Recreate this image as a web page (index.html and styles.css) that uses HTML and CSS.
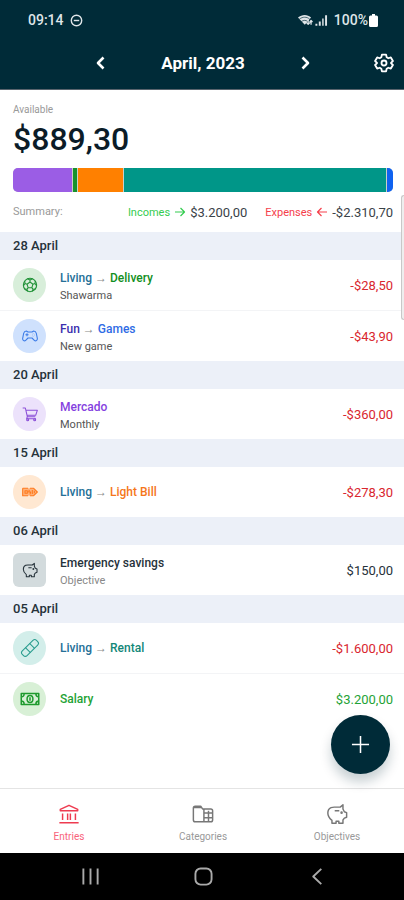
FILE: index.html
```html
<!DOCTYPE html>
<html lang="en">
<head>
<meta charset="utf-8">
<meta name="viewport" content="width=device-width, initial-scale=1">
<title>Entries</title>
<link rel="stylesheet" href="styles.css">
</head>
<body>
<svg class="defs" aria-hidden="true">
  <symbol id="pig" viewBox="0 0 24 24">
    <path d="M9 4.500h6.500L18.500 2v4.500l1.500 3 2.500 1v5l-2.500 1-1.500 2V22h-4.500v-2h-3v2H6.500v-3Q2 15.500 2 11t3.500-6Q7 4.500 9 4.500zM9.500 8.500h5"/>
    <circle cx="17" cy="10.500" r=".6"/>
  </symbol>
</svg>
<header class="top">
  <div class="status">
    <span class="status-side">09:14
      <svg class="dnd" viewBox="0 0 12 12"><circle cx="6" cy="6" r="4.800"/><path d="M3.500 6h5"/></svg>
    </span>
    <span class="status-side">
      <svg class="signal" viewBox="0 0 31 14">
        <path class="solid" d="M0 4.500C4 1 10 1 13.500 4.500L7 12z"/>
        <path class="gap" d="M1.500 6C5 3.500 9 3.500 12 6M3.500 8.500C6 7 8 7 10 8.500"/>
        <path class="wave" d="M10.500 6.500v5m-2-2 2 2 2-2M13.500 12V7.500m-1.500 1.500 1.500-1.500L15 9"/>
        <path class="solid" d="M18 13v-2h2v2zM21.500 13V8.500h2V13zM25 13V5.500h1.500V13zM28 13V2h2v11z"/>
      </svg>
      <span class="charge">100%<svg class="battery" viewBox="0 0 9 13"><path d="M3 0h3v1.500h1.500Q9 1.500 9 3v8.500Q9 13 7.500 13h-6Q0 13 0 11.500V3Q0 1.500 1.500 1.500H3z"/></svg></span>
    </span>
  </div>
  <div class="month-bar">
    <div class="month">
      <button class="icon-btn" aria-label="Previous month"><svg class="chevron" viewBox="0 0 16 16"><path d="M10.500 2.500 5 8l5.500 5.500"/></svg></button>
      <h1>April, 2023</h1>
      <button class="icon-btn" aria-label="Next month"><svg class="chevron" viewBox="0 0 16 16"><path d="M5.500 2.500 11 8l-5.500 5.500"/></svg></button>
    </div>
    <button class="icon-btn settings" aria-label="Settings"><svg class="gear" viewBox="0 0 24 24"><path d="M9.500 2h5l.7 3.100 2 1.200 3-1 2.500 4.300L20.400 11.800v.4l2.300 2.200-2.500 4.300-3-1-2 1.200-.7 3.100h-5l-.7-3.100-2-1.200-3 1-2.500-4.300 2.300-2.200v-.4L1.300 9.600l2.500-4.300 3 1 2-1.200z"/><circle cx="12" cy="12" r="3"/></svg></button>
  </div>
</header>

<main class="content">
  <section class="overview">
    <p class="label">Available</p>
    <p class="balance">$889,30</p>
    <div class="bar">
      <span class="seg purple" style="flex-grow:59"></span>
      <span class="seg green" style="flex-grow:4"></span>
      <span class="seg orange" style="flex-grow:45"></span>
      <span class="seg teal" style="flex-grow:262"></span>
      <span class="seg blue" style="flex-grow:6"></span>
    </div>
    <div class="summary">
      <span class="label">Summary:</span>
      <span class="total income">Incomes <svg class="arrow" viewBox="0 0 12 12"><path d="M1 6h9.500M6.500 2l4 4-4 4"/></svg> <b>$3.200,00</b></span>
      <span class="total expense">Expenses <svg class="arrow" viewBox="0 0 12 12"><path d="M11 6H1.500M5.500 2l-4 4 4 4"/></svg> <b>-$2.310,70</b></span>
    </div>
  </section>

  <section class="day">
    <h2>28 April</h2>
    <ul>
      <li>
        <span class="badge bg-green"><svg viewBox="0 0 24 24"><circle cx="12" cy="12" r="10"/><path d="m12 7.500 4.500 3.300-1.700 5.200H9.200l-1.700-5.200zM12 7.500V4.500l4-1.800M12 4.500 8 2.700M16.500 10.800l3-1 2 3M19.500 9.800l.5-4M14.800 16l1.700 2.500 4-.5M16.500 18.500l-1 3M9.200 16l-1.700 2.500-4-.5M7.500 18.500l1 3M7.500 10.800l-3-1-2 3M4.500 9.800 4 5.800"/></svg></span>
        <div class="info"><p class="name"><span class="c-living">Living</span> <i>→</i> <span class="c-green">Delivery</span></p><p class="note">Shawarma</p></div>
        <span class="amount c-red">-$28,50</span>
      </li>
      <li>
        <span class="badge bg-blue"><svg viewBox="0 0 24 24"><path d="M6.500 4.500 9 6h6l2.500-1.500c2 0 3.500 1.500 4 3.500l1.500 7.500c.5 3-2.500 5-4.500 3L15 15H9l-3.500 3.500c-2 2-5 0-4.500-3L2.500 8c.5-2 2-3.500 4-3.500zM7.500 8v4.500M5.200 10.200h4.600M15 10.500h.5M18.500 10.500h.5M16.800 8.500v.5M16.800 12v.5"/></svg></span>
        <div class="info"><p class="name"><span class="c-indigo">Fun</span> <i>→</i> <span class="c-blue">Games</span></p><p class="note">New game</p></div>
        <span class="amount c-red">-$43,90</span>
      </li>
    </ul>
  </section>

  <section class="day">
    <h2>20 April</h2>
    <ul>
      <li>
        <span class="badge bg-purple"><svg viewBox="0 0 24 24"><path d="M1 3h4l3 13h12M5.800 6.500H23L20.500 14H7.500M8 16l-1 3h14"/><circle cx="8.500" cy="20.500" r="1.500"/><circle cx="19" cy="20.500" r="1.500"/></svg></span>
        <div class="info"><p class="name c-purple">Mercado</p><p class="note">Monthly</p></div>
        <span class="amount c-red">-$360,00</span>
      </li>
    </ul>
  </section>

  <section class="day">
    <h2>15 April</h2>
    <ul>
      <li>
        <span class="badge bg-orange"><svg viewBox="0 0 24 24"><path class="tint" d="M1 6.500h16.500l5.500 5.500-5.500 5.500H1z"/><path d="M1 6.500h8M12 6.500h5.500l5.500 5.500-5.500 5.500H12M9 17.500H1v-11M4.500 10H8v4H4.500zM11 9l-1 3h3l-1 3.500M15.500 9v6M18.500 10v4"/></svg></span>
        <div class="info"><p class="name"><span class="c-living">Living</span> <i>→</i> <span class="c-orange">Light Bill</span></p></div>
        <span class="amount c-red">-$278,30</span>
      </li>
    </ul>
  </section>

  <section class="day">
    <h2>06 April</h2>
    <ul>
      <li>
        <span class="badge square"><svg><use href="#pig"/></svg></span>
        <div class="info"><p class="name">Emergency savings</p><p class="note soft">Objective</p></div>
        <span class="amount">$150,00</span>
      </li>
    </ul>
  </section>

  <section class="day">
    <h2>05 April</h2>
    <ul>
      <li>
        <span class="badge bg-teal"><svg class="wide" viewBox="0 0 24 24"><rect x="0" y="8" width="24" height="8" rx="3" transform="rotate(-45 12 12)"/><path d="M6.500 11.500l6 6M11.500 6.500l6 6M12 12h.1M18 6h.1M6 18h.1"/></svg></span>
        <div class="info"><p class="name"><span class="c-living">Living</span> <i>→</i> <span class="c-teal">Rental</span></p></div>
        <span class="amount c-red">-$1.600,00</span>
      </li>
      <li>
        <span class="badge bg-lime"><svg class="wide" viewBox="0 0 24 24"><path class="heavy" d="M1.500 5.500h21v13h-21zM1.500 9.500q3.500 0 3.500-4M22.500 9.500q-3.500 0-3.500-4M1.500 14.500q3.500 0 3.500 4M22.500 14.500q-3.500 0-3.500 4"/><ellipse class="heavy" cx="12" cy="12" rx="3.500" ry="4.200"/><path class="heavy" d="M12 10v4"/></svg></span>
        <div class="info"><p class="name c-lime">Salary</p></div>
        <span class="amount c-lime">$3.200,00</span>
      </li>
    </ul>
  </section>
  <span class="scroll-thumb"></span>
</main>

<footer class="bottom">
  <button class="fab" aria-label="Add entry"><svg viewBox="0 0 20 20"><path d="M10 1v18M1 10h18"/></svg></button>
  <nav class="tabs">
    <a href="#entries" class="active"><svg viewBox="0 0 24 24"><path d="M2.500 8.500V7L12 2.500 21.500 7v1.500zM5 11.500v7M10.500 11.500v7M13.500 11.500v7M19 11.500v7M1.500 21.500h21"/></svg>Entries</a>
    <a href="#categories"><svg viewBox="0 0 24 24"><path d="M22.500 18.500q0 2-2 2h-17q-2 0-2-2V5.500q0-2 2-2h6l2 3h9q2 0 2 2zM2 5h8M13 6.500v14M13 11h9.500M13 16h9.500M18 8.500v12"/></svg>Categories</a>
    <a href="#objectives"><svg><use href="#pig"/></svg>Objectives</a>
  </nav>
  <div class="system">
    <button aria-label="Recent apps"><svg viewBox="0 0 20 20"><path d="M2.500 1.500v17M10 1.500v17M17.500 1.500v17"/></svg></button>
    <button aria-label="Home"><svg viewBox="0 0 20 20"><rect x="1.500" y="1.500" width="17" height="17" rx="5.500"/></svg></button>
    <button aria-label="Back"><svg viewBox="0 0 20 20"><path d="M14 2 5.500 10l8.500 8"/></svg></button>
  </div>
</footer>
</body>
</html>
```
FILE: styles.css
```css
* { box-sizing: border-box; margin: 0; padding: 0; }

body {
  display: flex;
  flex-direction: column;
  min-height: 100vh;
  background: #fff;
  color: #26323a;
  font-family: Roboto, "Liberation Sans", sans-serif;
  font-size: 12px;
}

button { border: 0; background: none; color: inherit; font: inherit; }
ul { list-style: none; }
svg { display: block; fill: none; stroke: currentColor; stroke-linejoin: round; flex: none; }
.defs { position: absolute; width: 0; height: 0; }

/* Header */
.top { background: #002b38; color: #fff; border-bottom: 1px solid #59646d; }
.status {
  display: flex;
  justify-content: space-between;
  align-items: center;
  height: 40px;
  padding: 0 26px 0 28px;
  color: #dfe5e8;
  font-size: 14px;
  font-weight: 500;
}
.status-side { display: flex; align-items: center; gap: 6px; }
.charge { display: flex; align-items: center; gap: 1px; }
.dnd { width: 13px; height: 13px; stroke-width: 1.3; }
.signal { width: 30px; height: 14px; stroke: none; }
.battery { width: 9px; height: 13px; fill: #fff; stroke: none; }
.solid { fill: #dfe5e8; }
.gap { stroke: #002b38; stroke-width: .7; }
.wave { stroke: #dfe5e8; stroke-width: 1.3; }

.month-bar {
  display: grid;
  grid-template-columns: 1fr auto 1fr;
  align-items: center;
  height: 49px;
  padding: 0 8px 4px 10px;
}
.month { grid-column: 2; display: flex; align-items: center; justify-content: space-between; width: 228px; }
.month h1 { font-size: 17px; font-weight: 700; line-height: 24px; }
.icon-btn { display: grid; place-items: center; width: 24px; height: 24px; }
.settings { justify-self: end; }
.chevron { width: 16px; height: 16px; stroke-width: 2.6; }
.gear { width: 20px; height: 20px; stroke-width: 2.2; }

/* Overview */
.content { flex: 1; position: relative; }
.overview { padding: 12px 11px 0 13px; }
.label { color: #999; font-size: 10px; line-height: 16px; }
.balance { font-size: 32px; font-weight: 500; line-height: 42px; color: #0b1c28; }
.bar {
  display: flex;
  gap: 1px;
  height: 24px;
  margin-top: 8px;
  border-radius: 5px;
  overflow: hidden;
  background: #c9cfc9;
}
.seg { flex-basis: 0; }
.purple { background: #9b5de5; }
.green { background: #16922c; }
.orange { background: #ff8000; }
.teal { background: #009688; }
.blue { background: #0f62f0; }
.summary { display: flex; align-items: center; height: 40px; }
.summary .label { margin-right: auto; font-size: 11px; }
.total { display: flex; align-items: center; gap: 4px; font-size: 11px; }
.total b { color: #3a4248; font-size: 13px; font-weight: 400; }
.income { color: #35cc50; margin-right: 18px; }
.expense { color: #f5404c; }
.arrow { width: 12px; height: 12px; stroke-width: 1.2; }

/* Entries */
.day h2 {
  padding-left: 13px;
  background: #ecf0f8;
  font-size: 13px;
  font-weight: 500;
  line-height: 28px;
}
.day li {
  display: flex;
  align-items: center;
  gap: 14px;
  height: 50px;
  padding: 0 11px 0 13px;
}
.day li + li { border-top: 1px solid #f3f4f6; height: 51px; }
.badge {
  display: grid;
  place-items: center;
  width: 33px;
  height: 34px;
  border-radius: 50%;
}
.badge svg { width: 16px; height: 16px; stroke-width: 1.6; }
.badge svg.wide { width: 20px; height: 20px; stroke-width: 1.3; }
.badge .heavy { stroke-width: 1.8; }
.tint { fill: #ffb27a; stroke: none; }
.square { border-radius: 6px; background: #d3dbdd; }
.bg-green { background: #d8eeda; color: #1f9136; }
.bg-blue { background: #cfe1fd; color: #3c7ce8; }
.bg-purple { background: #ece2fb; color: #8b4fd8; }
.bg-orange { background: #ffe8d2; color: #ff7a1c; }
.bg-teal { background: #d3eeea; color: #2a9d8f; }
.bg-lime { background: #d8f0d6; color: #1f9a2e; }
.info { flex: 1; }
.info:has(.note) { padding-top: 3px; }
.name { font-size: 12px; font-weight: 500; line-height: 17px; }
.name i { color: #888; font-style: normal; font-weight: 400; }
.note { font-size: 11px; line-height: 17px; color: #555; }
.soft { color: #888; }
.amount { font-size: 13px; }
.c-living { color: #246f97; }
.c-green { color: #128f22; }
.c-indigo { color: #3c2fae; }
.c-blue { color: #2f6ce5; }
.c-purple { color: #8542e0; }
.c-orange { color: #f5761a; }
.c-teal { color: #128778; }
.c-lime { color: #1fa336; }
.c-red { color: #d9262e; }
.scroll-thumb {
  position: absolute;
  top: 105px;
  right: 0;
  width: 3px;
  height: 125px;
  border: 1px solid #c8c8c8;
  border-right: 0;
  border-radius: 3px 0 0 3px;
  background: #eee;
}

/* Bottom navigation */
.bottom { position: sticky; bottom: 0; }
.fab {
  position: absolute;
  right: 14px;
  top: -73px;
  display: grid;
  place-items: center;
  width: 59px;
  height: 59px;
  border-radius: 50%;
  background: #002b38;
  color: #fff;
  box-shadow: 0 8px 12px rgba(0, 43, 56, .22);
}
.fab svg { width: 19px; height: 19px; stroke-width: 1.6; }
.tabs {
  display: grid;
  grid-template-columns: repeat(3, 1fr);
  height: 65px;
  padding-left: 2px;
  border-top: 1px solid #e4e4e4;
  background: #fff;
}
.tabs a {
  display: flex;
  flex-direction: column;
  align-items: center;
  gap: 4px;
  padding-top: 14px;
  color: #999;
  font-size: 10px;
  line-height: 16px;
  text-decoration: none;
}
.tabs svg { width: 22px; height: 22px; stroke: #777; stroke-width: 1.6; }
.tabs .active { color: #f8637b; }
.tabs .active svg { stroke: #ee3b50; }
.system {
  display: flex;
  align-items: center;
  justify-content: space-between;
  height: 47px;
  padding: 0 75px 0 78px;
  background: #000;
  color: #aaa;
}
.system button { display: grid; place-items: center; width: 24px; height: 24px; }
.system svg { width: 19px; height: 19px; stroke-width: 2; }
```
